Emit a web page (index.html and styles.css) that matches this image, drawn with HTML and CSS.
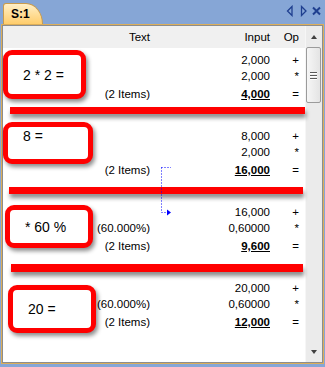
FILE: index.html
```html
<!DOCTYPE html>
<html lang="en">
<head>
    <meta charset="UTF-8">
    <title>S:1</title>
    <link rel="stylesheet" href="styles.css">
</head>
<body>
    <div class="tabbar">
        <div class="tab">S:1</div>
        <svg class="tools" width="36" height="12" viewBox="0 0 36 12">
            <polygon points="6,1.5 1.5,6 6,10.5" fill="none" stroke="#1f3f8f" stroke-width="1.3"/>
            <polygon points="15.5,1.5 20,6 15.5,10.5" fill="none" stroke="#1f3f8f" stroke-width="1.3"/>
            <path d="M27 2.5 L34 9.5 M34 2.5 L27 9.5" stroke="#1f3f8f" stroke-width="2"/>
        </svg>
    </div>

    <div class="panel">
        <div class="frame">
            <div class="list">
                <div class="row head">
                    <span>Text</span><span>Input</span><span>Op</span>
                </div>

                <div class="group">
                    <div class="row"><span></span><span>2,000</span><span>+</span></div>
                    <div class="row"><span></span><span>2,000</span><span>*</span></div>
                    <div class="row total"><span>(2 Items)</span><span class="num">4,000</span><span>=</span></div>
                </div>
                <div class="group">
                    <div class="row"><span></span><span>8,000</span><span>+</span></div>
                    <div class="row"><span></span><span>2,000</span><span>*</span></div>
                    <div class="row total"><span>(2 Items)</span><span class="num">16,000</span><span>=</span></div>
                </div>
                <div class="group">
                    <div class="row"><span></span><span>16,000</span><span>+</span></div>
                    <div class="row"><span>(60.000%)</span><span>0,60000</span><span>*</span></div>
                    <div class="row total"><span>(2 Items)</span><span class="num">9,600</span><span>=</span></div>
                </div>
                <div class="group">
                    <div class="row"><span></span><span>20,000</span><span>+</span></div>
                    <div class="row"><span>(60.000%)</span><span>0,60000</span><span>*</span></div>
                    <div class="row total"><span>(2 Items)</span><span class="num">12,000</span><span>=</span></div>
                </div>

                <!-- annotations drawn over the list -->
                <div class="bar bar-1"></div>
                <div class="bar bar-2"></div>
                <div class="bar bar-3"></div>

                <div class="note note-1">2 * 2 =</div>
                <div class="note note-2">8 =</div>
                <div class="note note-3">* 60 %</div>
                <div class="note note-4">20 =</div>

                <svg class="link" width="16" height="52" viewBox="0 0 16 52">
                    <path d="M3.5 3.5 H13 M3.5 3.5 V48.5 H10" fill="none" stroke="#0000ff" stroke-width="1" stroke-dasharray="1 2"/>
                    <polygon points="9,45.5 13,48.5 9,51.5" fill="#0000ff"/>
                </svg>
            </div>

            <div class="scrollbar">
                <div class="sb-button"><span class="arrow-up"></span></div>
                <div class="thumb">
                    <span class="grip"></span>
                    <span class="grip"></span>
                    <span class="grip"></span>
                </div>
                <div class="track"></div>
                <div class="sb-button"><span class="arrow-down"></span></div>
            </div>
        </div>
    </div>
</body>
</html>
```

FILE: styles.css
```css
* {
    margin: 0;
    padding: 0;
    box-sizing: border-box;
}

body {
    width: 325px;
    height: 367px;
    overflow: hidden;
    background: #86a6d6;
    font-family: "Liberation Sans", Arial, sans-serif;
    font-size: 11.5px;
    color: #000;
}

/* Tab strip */
.tabbar {
    height: 24px;
    display: flex;
    align-items: flex-end;
    justify-content: space-between;
    padding: 0 3px 0 3px;
}

.tab {
    width: 40px;
    height: 21px;
    border: 1px solid #c99b4c;
    border-bottom: none;
    border-radius: 3px 17px 0 0 / 3px 21px 0 0;
    background: linear-gradient(#ffefc6, #ffcd6c);
    font-weight: bold;
    font-size: 12px;
    line-height: 13px;
    padding: 4px 0 0 7px;
}

.tools {
    align-self: flex-start;
    margin-top: 5px;
}

/* Panel */
.panel {
    height: 340px;
    margin: 0 1px;
    border: 1px solid #dcae5a;
}

.frame {
    height: 100%;
    border: 1px solid #8d8d8d;
    display: flex;
}

.list {
    flex: 1;
    position: relative;
    background: #fff;
}

.row {
    display: grid;
    grid-template-columns: 147px 120px 29px;
    height: 16px;
    align-items: center;
    line-height: 16px;
    text-align: right;
    white-space: nowrap;
}

.head {
    height: 22px;
    background: #f0f0f0;
}

.group {
    height: 76px;
    padding-top: 4px;
}

.total {
    margin-top: 2px;
}

.total .num {
    font-weight: bold;
    text-decoration: underline;
}

/* Red annotation bars and boxes */
.bar {
    position: absolute;
    height: 7px;
    background: #ff0000;
    box-shadow: 1px 4px 4px rgba(0, 0, 0, 0.45);
}

.bar-1 { left: 7px; top: 81px; width: 295px; }
.bar-2 { left: 6px; top: 161px; width: 294px; }
.bar-3 { left: 8px; top: 238px; width: 292px; height: 8px; }

.note {
    position: absolute;
    border: 5px solid #ff0000;
    border-radius: 9px;
    background: #fff;
    box-shadow: 2px 3px 4px rgba(0, 0, 0, 0.45);
    font-size: 14px;
    display: flex;
    align-items: center;
    padding-left: 15px;
}

.note-1 { left: 0; top: 24px; width: 83px; height: 49px; }
.note-2 { left: 0; top: 96px; width: 90px; height: 42px; align-items: flex-start; padding-top: 1px; }
.note-3 { left: 2px; top: 179px; width: 88px; height: 43px; }
.note-4 { left: 5px; top: 259px; width: 88px; height: 48px; }

.link {
    position: absolute;
    left: 155px;
    top: 138px;
}

/* Scrollbar */
.scrollbar {
    width: 17px;
    background: #ebebeb;
    border-left: 1px solid #f6f6f6;
    display: flex;
    flex-direction: column;
}

.sb-button {
    height: 21px;
    display: flex;
    align-items: center;
    justify-content: center;
}

.arrow-up {
    border-left: 3.5px solid transparent;
    border-right: 3.5px solid transparent;
    border-bottom: 4px solid #404040;
}

.arrow-down {
    border-left: 3.5px solid transparent;
    border-right: 3.5px solid transparent;
    border-top: 4px solid #404040;
}

.thumb {
    height: 56px;
    margin: 0 1px 0 0;
    border: 1px solid #9b9b9b;
    border-radius: 2px;
    background: linear-gradient(90deg, #f6f6f6, #e4e4e4);
    display: flex;
    flex-direction: column;
    align-items: center;
    justify-content: center;
    gap: 2px;
}

.grip {
    width: 7px;
    height: 1px;
    background: #5a5a5a;
    box-shadow: 0 1px 0 #fff;
}

.track {
    flex: 1;
}
```
